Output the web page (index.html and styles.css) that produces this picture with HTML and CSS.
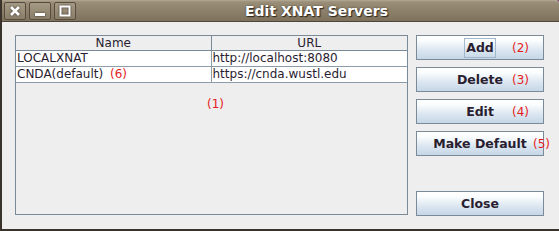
FILE: index.html
```html
<!DOCTYPE html>
<html lang="en">
<head>
    <meta charset="UTF-8">
    <title>Edit XNAT Servers</title>
    <link rel="stylesheet" href="styles.css">
</head>
<body>

    <div class="window">
        <div class="titlebar">
            <div class="wm-buttons">
                <div class="wm-btn">
                    <svg width="12" height="12" viewBox="0 0 12 12"><path d="M2 2 L10 10 M10 2 L2 10" stroke="#fff" stroke-width="2.6"/></svg>
                </div>
                <div class="wm-btn">
                    <svg width="12" height="12" viewBox="0 0 12 12"><rect x="1" y="8" width="10" height="3" fill="#fff"/></svg>
                </div>
                <div class="wm-btn">
                    <svg width="12" height="12" viewBox="0 0 12 12"><rect x="1.5" y="1.5" width="9" height="9" fill="none" stroke="#fff" stroke-width="2"/></svg>
                </div>
            </div>
            <div class="title">Edit XNAT Servers</div>
        </div>

        <div class="content">
            <div class="table-pane">
                <div class="row header">
                    <div class="cell">Name</div>
                    <div class="cell">URL</div>
                </div>
                <div class="row">
                    <div class="cell">LOCALXNAT</div>
                    <div class="cell">http://localhost:8080</div>
                </div>
                <div class="row">
                    <div class="cell">CNDA(default) <span class="note row-note">(6)</span></div>
                    <div class="cell">https://cnda.wustl.edu</div>
                </div>
                <span class="note pane-note">(1)</span>
            </div>

            <div class="buttons">
                <button class="btn"><span class="focus">Add</span><span class="note btn-note n2">(2)</span></button>
                <button class="btn">Delete<span class="note btn-note n3">(3)</span></button>
                <button class="btn">Edit<span class="note btn-note n4">(4)</span></button>
                <button class="btn">Make Default<span class="note btn-note n5">(5)</span></button>
                <div class="spacer"></div>
                <button class="btn">Close</button>
            </div>
        </div>
    </div>

</body>
</html>
```

FILE: styles.css
```css
body {
    margin: 0;
    background: #7a3a68;
    font-family: "DejaVu Sans", sans-serif;
    font-size: 12px;
}
.window {
    width: 559px;
    height: 231px;
    background: #eeeeee;
    box-sizing: border-box;
    border-left: 2px solid #3a332c;
    border-bottom: 2px solid #3a332c;
    border-top-right-radius: 4px;
    overflow: hidden;
    position: relative;
}
.titlebar {
    height: 21px;
    display: flex;
    align-items: center;
    background: linear-gradient(#b4a994 0, #9a8e78 2px, #8d816b 50%, #7f725c 100%);
    border-bottom: 1px solid #4e453b;
}
.wm-buttons {
    display: flex;
    gap: 3px;
    padding-left: 2px;
}
.wm-btn {
    width: 20px;
    height: 16px;
    border: 1px solid #564c40;
    border-radius: 2px;
    background: linear-gradient(#a59a85, #8a7e68);
    display: flex;
    align-items: center;
    justify-content: center;
}
.wm-btn svg {
    filter: drop-shadow(0 0 1px #3a332c);
}
.title {
    flex: 1;
    text-align: center;
    color: #ffffff;
    font-weight: bold;
    font-size: 14px;
    text-shadow: 1px 1px 1px #2e2820, 0 0 2px #4a4034;
    padding-right: 2px;
}
.content {
    display: flex;
    padding: 13px 15px 0 13px;
    gap: 8px;
}
.table-pane {
    width: 393px;
    height: 180px;
    box-sizing: border-box;
    border: 1px solid #7a8a99;
    position: relative;
}
.row {
    display: flex;
    height: 16px;
    box-sizing: border-box;
    border-bottom: 1px solid #8e9ba8;
    background: #ffffff;
    color: #2a1d30;
}
.row.header {
    background: #eeeeee;
    height: 15px;
    border-bottom: 1px solid #7a8a99;
}
.cell {
    width: 196px;
    padding-left: 1px;
    line-height: 15px;
    white-space: nowrap;
}
.cell:first-child {
    width: 195px;
    border-right: 1px solid #8e9ba8;
}
.header .cell {
    text-align: center;
    line-height: 14px;
    padding-left: 0;
    border-right-color: #7a8a99;
}
.note {
    color: #e41c1c;
    font-size: 12px;
    font-weight: normal;
}
.row-note {
    margin-left: 3px;
}
.pane-note {
    position: absolute;
    left: 191px;
    top: 61px;
}
.buttons {
    display: flex;
    flex-direction: column;
    width: 128px;
}
.btn {
    height: 25px;
    margin-bottom: 7px;
    border: 1px solid #7a8a99;
    background: linear-gradient(#ffffff 0, #fbfdfe 20%, #dce7f1 60%, #c5d6e7 100%);
    font-family: "DejaVu Sans", sans-serif;
    font-weight: bold;
    font-size: 12.5px;
    color: #2a1d30;
    padding: 0;
    position: relative;
    text-align: center;
}
.focus {
    border: 1px solid #a3b8cc;
    padding: 1px 1px 2px 1px;
}
.spacer {
    height: 28px;
}
.btn-note {
    position: absolute;
    top: 5px;
}
.n2 { left: 95px; }
.n3 { left: 95px; }
.n4 { left: 95px; }
.n5 { left: 116px; }
```
